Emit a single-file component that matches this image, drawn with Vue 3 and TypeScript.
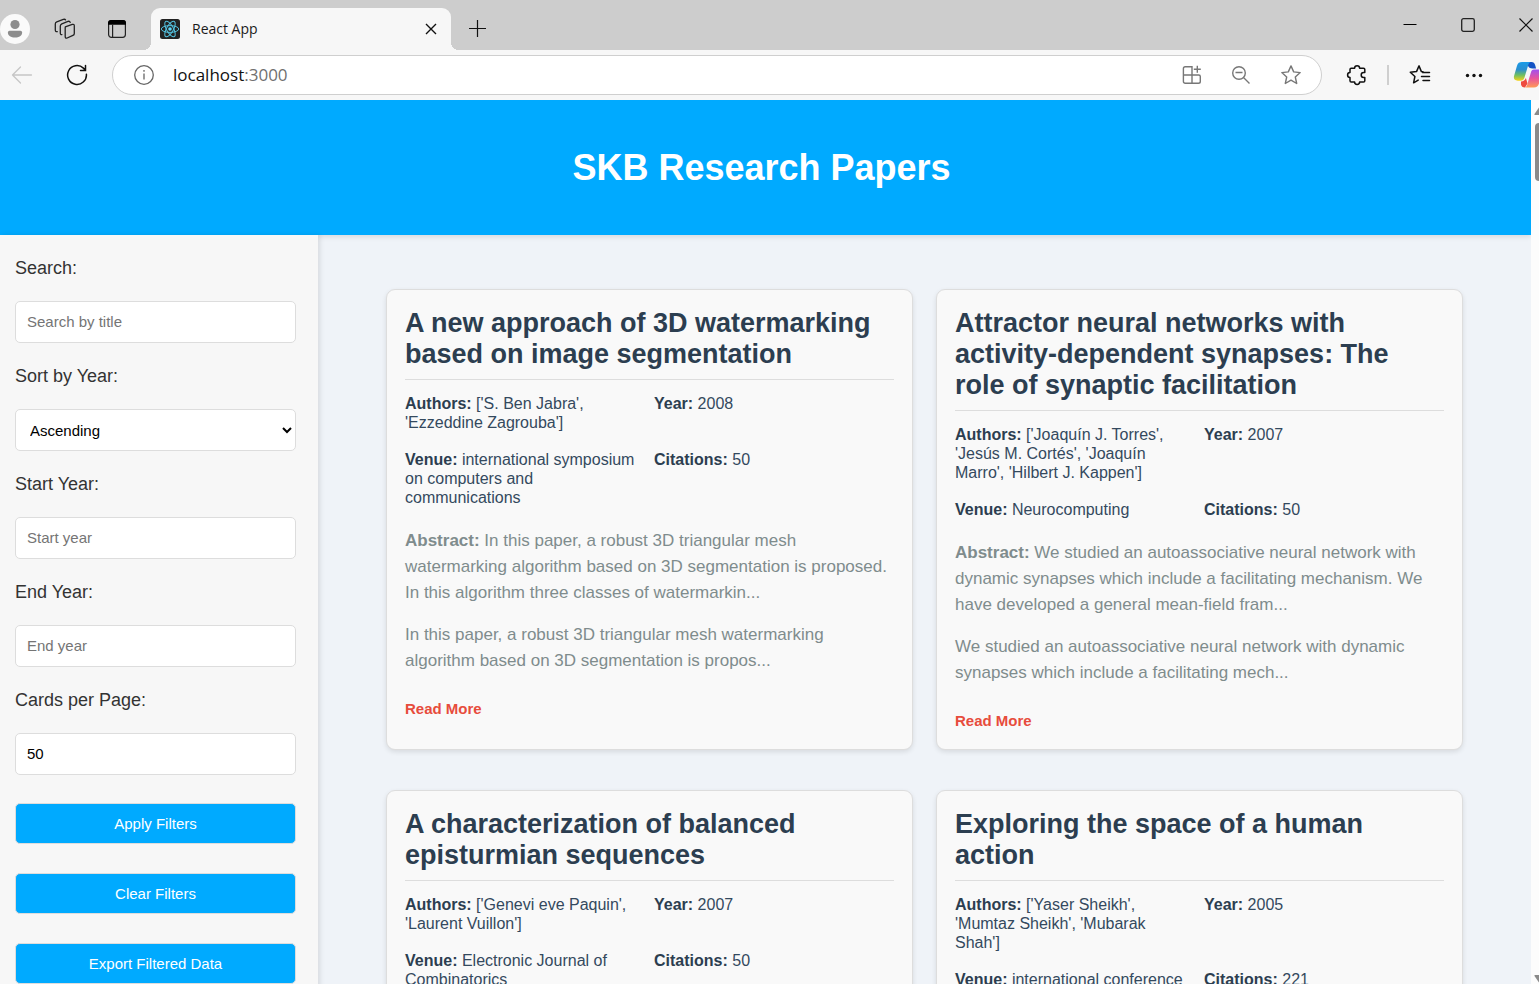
<script setup lang="ts">
import { ref } from 'vue'

interface Paper {
  title: string
  authors: string
  year: number
  venue: string
  citations: number
  abstract: string
  summary: string
}

const search = ref('')
const sortOrder = ref('asc')
const startYear = ref('')
const endYear = ref('')
const perPage = ref('50')

const papers: Paper[] = [
  {
    title: 'A new approach of 3D watermarking based on image segmentation',
    authors: "['S. Ben Jabra', 'Ezzeddine Zagrouba']",
    year: 2008,
    venue: 'international symposium on computers and communications',
    citations: 50,
    abstract:
      'In this paper, a robust 3D triangular mesh watermarking algorithm based on 3D segmentation is proposed. In this algorithm three classes of watermarkin...',
    summary:
      'In this paper, a robust 3D triangular mesh watermarking algorithm based on 3D segmentation is propos...',
  },
  {
    title: 'Attractor neural networks with activity-dependent synapses: The role of synaptic facilitation',
    authors: "['Joaquín J. Torres', 'Jesús M. Cortés', 'Joaquín Marro', 'Hilbert J. Kappen']",
    year: 2007,
    venue: 'Neurocomputing',
    citations: 50,
    abstract:
      'We studied an autoassociative neural network with dynamic synapses which include a facilitating mechanism. We have developed a general mean-field fram...',
    summary:
      'We studied an autoassociative neural network with dynamic synapses which include a facilitating mech...',
  },
  {
    title: 'A characterization of balanced episturmian sequences',
    authors: "['Genevi eve Paquin', 'Laurent Vuillon']",
    year: 2007,
    venue: 'Electronic Journal of Combinatorics',
    citations: 50,
    abstract: '',
    summary: '',
  },
  {
    title: 'Exploring the space of a human action',
    authors: "['Yaser Sheikh', 'Mumtaz Sheikh', 'Mubarak Shah']",
    year: 2005,
    venue: 'international conference',
    citations: 221,
    abstract: '',
    summary: '',
  },
]
</script>

<template>
  <div class="window">
    <div class="tabstrip">
      <button class="avatar" aria-label="Profile">
        <svg width="30" height="30" viewBox="0 0 30 30">
          <circle cx="15" cy="15" r="15" fill="#fafafa" />
          <circle cx="15" cy="10.500" r="4.600" fill="#8d8d8d" />
          <path d="M9.500 16.800h11a1.600 1.600 0 0 1 1.600 1.600c0 3.200-3 5.100-7.100 5.100s-7.100-1.900-7.100-5.100a1.600 1.600 0 0 1 1.600-1.600z" fill="#8d8d8d" />
        </svg>
      </button>
      <button class="strip-icon" aria-label="Workspaces">
        <svg width="24" height="24" viewBox="0 0 24 24" fill="none" stroke="#222" stroke-width="1.3" stroke-linejoin="round" stroke-linecap="round">
          <path d="M12.300 9.900l7-2.500q2-.5 2 1.400v7.600q0 1.500-1.400 2l-5.700 2.600q-2 .7-2-1.400v-8q0-1.300.1-1.700z" />
          <path d="M8.900 17.700q-1.600.2-1.600-1.600V9q0-1.500 1.500-2.200l6.200-2.400q1.700-.5 2.200 1" />
          <path d="M4.300 14.700q-2 .2-2-1.600V7q0-1.600 1.500-2.200l6.500-2.400q1.600-.5 2.200.5" />
        </svg>
      </button>
      <button class="strip-icon" aria-label="Tab actions">
        <svg width="24" height="24" viewBox="0 0 24 24">
          <rect x="3.600" y="3.600" width="16.800" height="16.800" rx="2.800" fill="none" stroke="#222" stroke-width="1.200" />
          <path d="M3 7.800V6a3 3 0 0 1 3-3h12a3 3 0 0 1 3 3v1.800z" fill="#000" />
          <path d="M7.600 7.500v13" stroke="#222" stroke-width="1.200" />
        </svg>
      </button>
      <div class="tab">
        <svg width="20" height="20" viewBox="0 0 20 20">
          <rect width="20" height="20" rx="2.500" fill="#222" />
          <g fill="none" stroke="#53c1de" stroke-width="1">
            <ellipse cx="10" cy="10" rx="8.700" ry="3.400" />
            <ellipse cx="10" cy="10" rx="8.700" ry="3.400" transform="rotate(60 10 10)" />
            <ellipse cx="10" cy="10" rx="8.700" ry="3.400" transform="rotate(120 10 10)" />
          </g>
          <circle cx="10" cy="10" r="1.800" fill="#61dafb" />
        </svg>
        <span class="tab-title">React App</span>
        <button class="tab-close" aria-label="Close tab">
          <svg width="12" height="12" viewBox="0 0 12 12" stroke="#111" stroke-width="1.400"><path d="M1 1l10 10M11 1L1 11" /></svg>
        </button>
      </div>
      <button class="new-tab" aria-label="New tab">
        <svg width="18" height="18" viewBox="0 0 18 18" stroke="#111" stroke-width="1.200"><path d="M8.500 0v17M0 8.500h17" /></svg>
      </button>
      <div class="window-controls">
        <button aria-label="Minimize">
          <svg width="14" height="14" viewBox="0 0 14 14" stroke="#000"><path d="M.5 6.500h13" /></svg>
        </button>
        <button aria-label="Maximize">
          <svg width="14" height="14" viewBox="0 0 14 14" fill="none" stroke="#222" stroke-width="1.300"><rect x=".7" y=".7" width="12.600" height="12.600" rx="1.800" /></svg>
        </button>
        <button aria-label="Close">
          <svg width="14" height="14" viewBox="0 0 14 14" stroke="#111" stroke-width="1.200"><path d="M.5.5l13 13M13.500.5l-13 13" /></svg>
        </button>
      </div>
    </div>

    <div class="toolbar">
      <button class="tool back" aria-label="Back">
        <svg width="22" height="20" viewBox="0 0 22 20" fill="none" stroke="#c6c6c6" stroke-width="1.300" stroke-linecap="round" stroke-linejoin="round"><path d="M20.500 10H1.500M9.500 2L1.500 10l8 8" /></svg>
      </button>
      <button class="tool reload" aria-label="Refresh">
        <svg width="22" height="22" viewBox="0 0 22 22" fill="none" stroke="#111" stroke-width="1.500" stroke-linecap="round"><path d="M20.400 10.300a9.400 9.400 0 1 1-3-6.200l2 2M19.500 1.500v5h-5" /></svg>
      </button>
      <div class="address">
        <svg width="22" height="22" viewBox="0 0 22 22" fill="none" stroke="#666" stroke-width="1.300"><circle cx="11" cy="11" r="9.300" /><path d="M11 9.500v6M11 6v1.700" /></svg>
        <span class="url">localhost<span class="port">:3000</span></span>
        <div class="address-icons">
          <button aria-label="Install app">
            <svg width="20" height="20" viewBox="0 0 20 20" fill="none" stroke="#777" stroke-width="1.400"><path d="M10 18.300H3.200a1.800 1.800 0 0 1-1.800-1.800V3.500a1.800 1.800 0 0 1 1.800-1.800H10zM1.400 10h15.300a1.600 1.600 0 0 1 1.600 1.600v4.900a1.800 1.800 0 0 1-1.800 1.800H10M15.300.8v7M11.800 4.300h7" /></svg>
          </button>
          <button aria-label="Zoom out">
            <svg width="20" height="20" viewBox="0 0 20 20" fill="none" stroke="#777" stroke-width="1.400"><circle cx="8" cy="8" r="6.300" /><path d="M12.500 12.500l6 6M4.500 7.500h7" /></svg>
          </button>
          <button aria-label="Add to favorites">
            <svg width="22" height="22" viewBox="0 0 22 22" fill="none" stroke="#777" stroke-width="1.400" stroke-linejoin="round"><path d="M11 1.900l2.700 6 6.500.7-4.900 4.400 1.400 6.500-5.700-3.300-5.700 3.300 1.400-6.500L1.800 8.600l6.500-.7z" /></svg>
          </button>
        </div>
      </div>
      <div class="tools-right">
        <button aria-label="Extensions">
          <svg width="22" height="22" viewBox="0 0 22 22" fill="none" stroke="#111" stroke-width="1.500" stroke-linejoin="round"><path d="M5.200 4.200H8.600C8.600 .8 13.600 .8 13.600 4.200H17.500Q18.800 4.200 18.800 5.500V8.600H17.600C14.400 8.600 14.400 13.600 17.600 13.600H18.800V16.700Q18.800 18 17.500 18H13.600C13.600 21.200 8.600 21.200 8.600 18H5.200Q4 18 4 16.700V13.600C.8 13.600 .8 8.600 4 8.600V5.500Q4 4.200 5.200 4.200Z" /></svg>
        </button>
        <span class="divider"></span>
        <button aria-label="Favorites">
          <svg width="22" height="22" viewBox="0 0 22 22" fill="none" stroke="#111" stroke-width="1.500" stroke-linejoin="round" stroke-linecap="round"><path d="M14 7.800l-1.600-.2L10 1.900 7.500 7.600 1.300 8.300l4.600 4.200-1.300 6.300 4.600-2.700M13.500 8.500H20.500M12.500 12.500H20.500M14 16.500H20.500" /></svg>
        </button>
        <button aria-label="Settings and more">
          <svg width="22" height="22" viewBox="0 0 22 22" fill="#111"><circle cx="4.500" cy="11.500" r="1.700" /><circle cx="11" cy="11.500" r="1.700" /><circle cx="17.500" cy="11.500" r="1.700" /></svg>
        </button>
        <button class="copilot" aria-label="Copilot">
          <svg width="30" height="28" viewBox="0 0 30 28">
            <defs>
              <linearGradient id="cpA" x1="0" y1="0" x2="0" y2="1"><stop offset="0" stop-color="#1a9be8" /><stop offset=".4" stop-color="#2a8fd0" /><stop offset=".7" stop-color="#6fbf62" /><stop offset="1" stop-color="#f5d31a" /></linearGradient>
              <linearGradient id="cpB" x1="0" y1="0" x2="0" y2="1"><stop offset="0" stop-color="#a04ff0" /><stop offset=".5" stop-color="#e8559c" /><stop offset="1" stop-color="#ff9a56" /></linearGradient>
            </defs>
            <path d="M15 1h3.500c2 0 3 1 3.600 3l1 3.500h-3.600c-2.500 0-4-1-4.700-3.300z" fill="#1453c4" />
            <path d="M9 1h8.500c-1.300.6-1.900 1.700-2.400 3.500l-3.600 12c-.8 2.300-1.800 3.200-4 3.200H4.700C1.500 19.700.3 17.700 1.100 14.700L4 4.700C4.800 2 6.300 1 9 1z" fill="url(#cpA)" />
            <path d="M8 20.500c2.500-.3 4-1.200 4.900-3.500l1.600 5.500-2.500 3.900C9.500 26.400 8.500 25.400 8 23.500z" fill="#ee4b3f" />
            <path d="M21 8.500h4.300c3.200 0 4.400 2 3.600 5l-2.900 9c-.8 2.700-2.300 3.900-5 3.900h-9c1.300-.6 1.900-1.700 2.400-3.500l3.400-11.200c.6-2.200 1.500-3.200 3.200-3.200z" fill="url(#cpB)" />
          </svg>
        </button>
      </div>
    </div>

    <div class="viewport">
      <div class="page">
        <header class="page-header"><h1>SKB Research Papers</h1></header>
        <div class="body">
          <aside class="sidebar">
            <form @submit.prevent>
              <label for="search">Search:</label>
              <input id="search" v-model="search" type="text" placeholder="Search by title" />
              <label for="sort">Sort by Year:</label>
              <select id="sort" v-model="sortOrder">
                <option value="asc">Ascending</option>
                <option value="desc">Descending</option>
              </select>
              <label for="start">Start Year:</label>
              <input id="start" v-model="startYear" type="text" placeholder="Start year" />
              <label for="end">End Year:</label>
              <input id="end" v-model="endYear" type="text" placeholder="End year" />
              <label for="per-page">Cards per Page:</label>
              <input id="per-page" v-model="perPage" type="text" />
              <div class="actions">
                <button type="button">Apply Filters</button>
                <button type="button">Clear Filters</button>
                <button type="button">Export Filtered Data</button>
              </div>
            </form>
          </aside>
          <main class="papers">
            <article v-for="paper in papers" :key="paper.title" class="card">
              <h2>{{ paper.title }}</h2>
              <div class="details">
                <p><strong>Authors:</strong> {{ paper.authors }}</p>
                <p><strong>Year:</strong> {{ paper.year }}</p>
                <p><strong>Venue:</strong> {{ paper.venue }}</p>
                <p><strong>Citations:</strong> {{ paper.citations }}</p>
              </div>
              <template v-if="paper.abstract">
                <p class="abstract"><strong>Abstract:</strong> {{ paper.abstract }}</p>
                <p class="abstract">{{ paper.summary }}</p>
                <a class="more" href="#">Read More</a>
              </template>
            </article>
          </main>
        </div>
      </div>
      <div class="scrollbar" aria-hidden="true">
        <svg width="16" height="12" viewBox="0 0 16 12"><path d="M8 1.500l4.500 6.500q.5 1-.5 1H4q-1 0-.5-1z" fill="#8a8a8a" /></svg>
        <div class="thumb"></div>
        <svg width="16" height="12" viewBox="0 0 16 12"><path d="M8 10.500L3.500 4q-.5-1 .5-1h8q1 0 .5 1z" fill="#8a8a8a" /></svg>
      </div>
    </div>
  </div>
</template>

<style>
html,
body {
  margin: 0;
  overflow: hidden;
}
</style>

<style scoped>
.window {
  display: flex;
  flex-direction: column;
  height: 100vh;
  overflow: hidden;
  font-family: "Liberation Sans", Arial, sans-serif;
}
.window * {
  box-sizing: border-box;
}
svg {
  display: block;
  flex: none;
}
.tabstrip button,
.toolbar button {
  display: flex;
  flex: none;
  align-items: center;
  justify-content: center;
  padding: 0;
  border: 0;
  background: none;
}

.tabstrip {
  display: flex;
  flex: none;
  align-items: flex-end;
  height: 50px;
  background: #cdcdcd;
  font-family: "Open Sans", "Noto Sans", sans-serif;
}
.avatar {
  width: 30px;
  height: 42px;
}
.strip-icon {
  width: 24px;
  height: 42px;
  margin-left: 23px;
}
.strip-icon + .strip-icon {
  margin-left: 28px;
}
.tab {
  position: relative;
  display: flex;
  align-items: center;
  width: 300px;
  height: 42px;
  margin-left: 22px;
  padding: 0 14px 0 9px;
  border-radius: 9px 9px 0 0;
  background: #f7f7f7;
}
.tab::before,
.tab::after {
  content: "";
  position: absolute;
  bottom: 0;
  width: 8px;
  height: 8px;
}
.tab::before {
  right: 100%;
  background: radial-gradient(circle at 0 0, transparent 8px, #f7f7f7 8px);
}
.tab::after {
  left: 100%;
  background: radial-gradient(circle at 100% 0, transparent 8px, #f7f7f7 8px);
}
.tab-title {
  flex: 1;
  margin-left: 12px;
  padding-bottom: 2px;
  color: #1b1b1b;
  font-size: 14px;
}
.new-tab {
  width: 18px;
  height: 42px;
  margin-left: 18px;
}
.window-controls {
  display: flex;
  gap: 44px;
  height: 50px;
  margin-left: auto;
  padding-right: 6px;
}
.window-controls button {
  width: 14px;
}

.toolbar {
  display: flex;
  flex: none;
  align-items: center;
  height: 50px;
  background: #f7f7f7;
}
.back {
  margin-left: 11px;
}
.reload {
  margin-left: 33px;
}
.address {
  display: flex;
  flex: 1;
  align-items: center;
  height: 40px;
  margin-left: 24px;
  padding: 0 19px 0 20px;
  border: 1px solid #cfcfcf;
  border-radius: 20px;
  background: #fff;
}
.url {
  flex: 1;
  margin-left: 18px;
  padding-bottom: 2px;
  color: #111;
  font-family: "Open Sans", "Noto Sans", sans-serif;
  font-size: 17px;
}
.port {
  color: #707070;
}
.address-icons {
  display: flex;
  align-items: center;
  gap: 29px;
}
.tools-right {
  display: flex;
  align-items: center;
  margin-left: 24px;
}
.divider {
  width: 2px;
  height: 20px;
  margin: 0 20px 0 19px;
  background: #cfcfcf;
}
.tools-right button + button {
  margin-left: 32px;
}
.tools-right .copilot {
  width: 26px;
  margin-left: 28px;
  overflow: hidden;
  justify-content: flex-start;
}

.viewport {
  display: flex;
  flex: 1;
  min-height: 0;
  overflow: hidden;
}
.page {
  flex: 1;
  min-width: 0;
  height: 100%;
  overflow: hidden;
  background: #eff3f8;
}
.page-header {
  position: relative;
  display: flex;
  align-items: center;
  justify-content: center;
  height: 135px;
  padding-right: 8px;
  background: #00aaff;
  color: #fff;
  box-shadow: 0 2px 5px rgba(0, 0, 0, 0.1);
}
.page-header h1 {
  margin: 0;
  font-size: 36px;
  line-height: 42px;
}
.body {
  display: flex;
  align-items: stretch;
}
.sidebar {
  position: relative;
  flex: none;
  width: 318px;
  padding: 23px 22px 23px 15px;
  background: #f7f7f7;
  box-shadow: 2px 0 5px rgba(0, 0, 0, 0.1);
}
.sidebar label {
  display: block;
  margin-bottom: 23px;
  color: #333;
  font-size: 18px;
  line-height: 20px;
}
.sidebar input,
.sidebar select {
  display: block;
  width: 100%;
  height: 42px;
  margin: 0 0 23px;
  padding: 0 11px 2px;
  border: 1px solid #ddd;
  border-radius: 5px;
  background: #fff;
  color: #000;
  font-family: inherit;
  font-size: 15px;
}
.sidebar select {
  padding: 1px 0 0 10px;
}
.sidebar input::placeholder {
  color: #757575;
}
.actions {
  display: flex;
  flex-direction: column;
  gap: 29px;
  padding-top: 5px;
}
.actions button {
  height: 41px;
  padding: 0;
  border: 1px solid #ddd;
  border-radius: 5px;
  background: #00aaff;
  color: #fff;
  font-family: inherit;
  font-size: 15px;
}
.papers {
  display: grid;
  flex: 1;
  grid-template-columns: 1fr 1fr;
  gap: 40px 23px;
  align-content: start;
  min-width: 0;
  padding: 54px 68px;
}
.card {
  min-height: 461px;
  padding: 18px;
  border: 1px solid #ddd;
  border-radius: 9px;
  background: #f9f9f9;
  box-shadow: 0 2px 5px rgba(0, 0, 0, 0.1);
}
.card h2 {
  margin: 0 0 14px;
  padding-bottom: 9px;
  border-bottom: 1px solid #ddd;
  color: #2c3e50;
  font-size: 27px;
  line-height: 31px;
}
.details {
  display: grid;
  grid-template-columns: 1fr 1fr;
  gap: 18px 9px;
  color: #34495e;
  font-size: 16px;
  line-height: 19px;
}
.details p {
  margin: 0;
  padding-right: 6px;
}
.details strong {
  color: #2c3e50;
}
.abstract {
  margin: 21px 0 0;
  color: #7f8c8d;
  font-size: 17px;
  line-height: 26px;
}
.abstract + .abstract {
  margin-top: 16px;
}
.more {
  display: inline-block;
  margin-top: 25px;
  color: #e74c3c;
  font-size: 15px;
  font-weight: bold;
  line-height: 20px;
  text-decoration: none;
}
.scrollbar {
  display: flex;
  flex: none;
  flex-direction: column;
  width: 8px;
  padding: 6px 0 0;
  overflow: hidden;
  background: #fcfcfc;
}
.thumb {
  width: 9px;
  height: 58px;
  margin: 5px 0 auto 4px;
  border-radius: 4px;
  background: #8a8a8a;
}
</style>
